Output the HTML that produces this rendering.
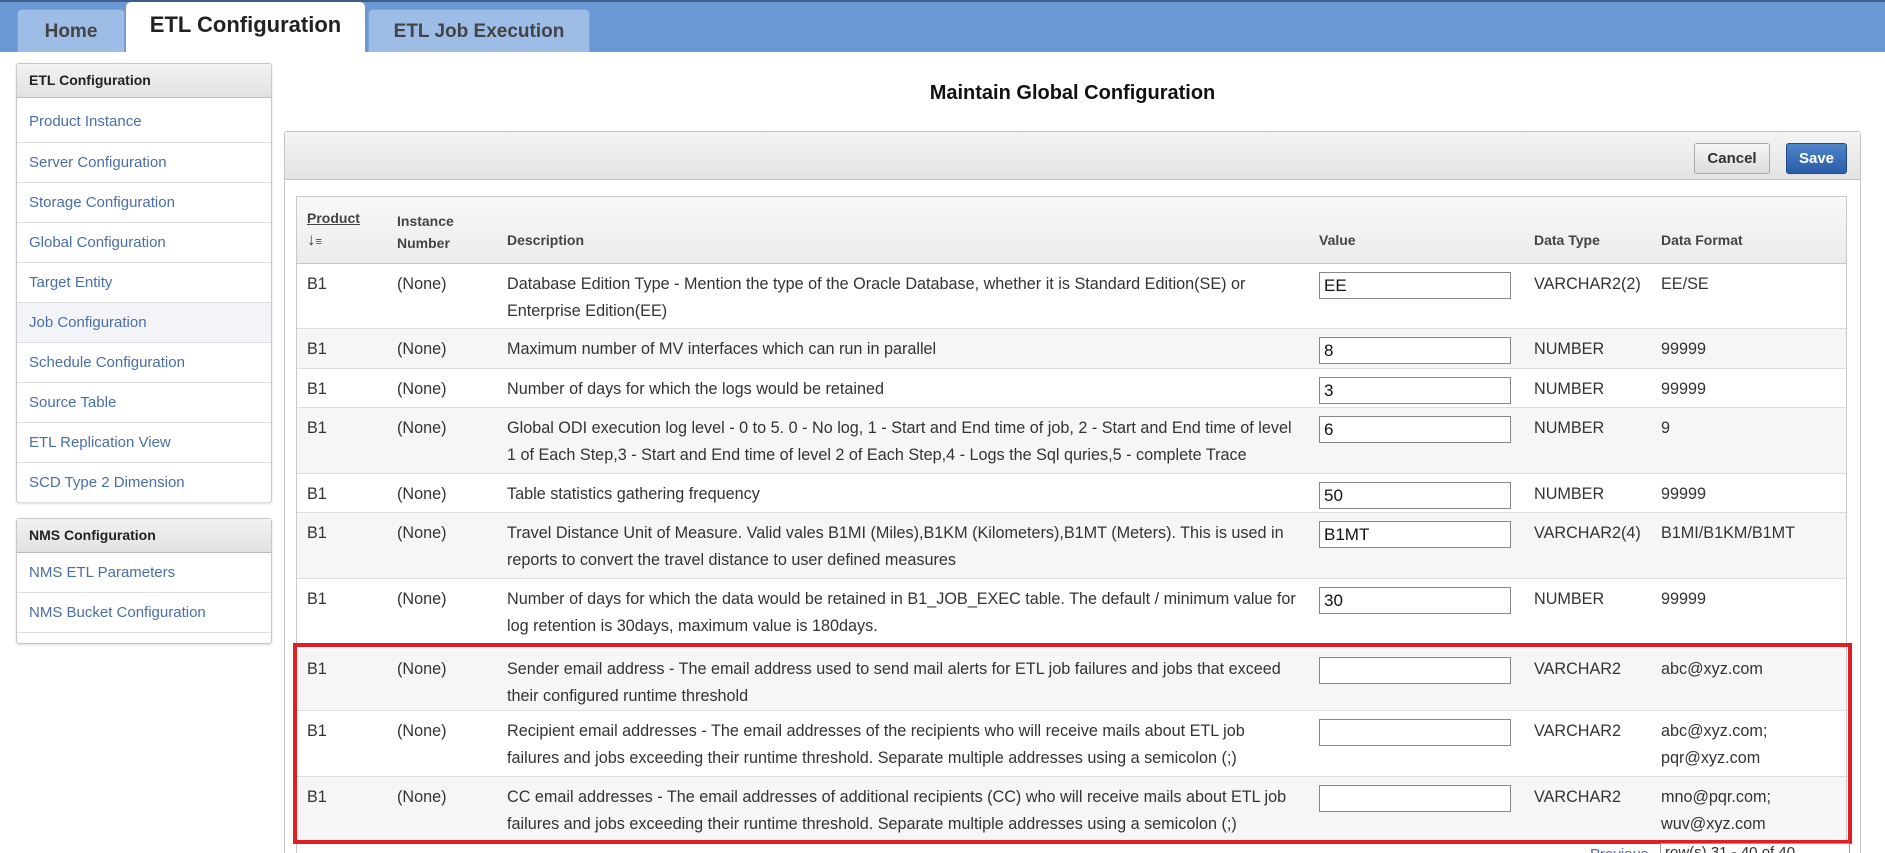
<!DOCTYPE html>
<html><head><meta charset="utf-8"><style>
*{box-sizing:border-box;margin:0;padding:0}
html,body{width:1885px;height:853px;overflow:hidden}
body{background:#fff;font-family:"Liberation Sans",Arial,sans-serif;color:#333;position:relative}
.topbar{position:absolute;left:0;top:0;width:1885px;height:52px;background:#6a98d4;border-top:2px solid #3d5f8a}
.tab{position:absolute;top:9px;height:43px;background:#9dbce6;border:1px solid #7fa4d6;border-bottom:none;border-radius:5px 5px 0 0;font-size:19px;font-weight:bold;color:#444;text-align:center;line-height:44px}
.tab.act{top:2px;height:50px;background:#fff;border:none;font-size:22px;color:#222;line-height:46px}
.side{position:absolute;left:16px;width:256px;border:1px solid #c8c8c8;border-radius:3px;background:#fff;box-shadow:0 1px 2px rgba(0,0,0,.15)}
.side .h{height:34px;background:linear-gradient(#f2f2f2,#e2e2e2);border-bottom:1px solid #bbb;font-weight:bold;font-size:14px;color:#222;padding:0 12px;line-height:32px}
.side .i{height:40px;border-bottom:1px solid #ddd;font-size:15px;color:#4a6ea8;padding:0 12px;line-height:40px}
.title{position:absolute;left:284px;width:1577px;top:82px;text-align:center;font-weight:bold;font-size:20px;color:#111}
.panel{position:absolute;left:284px;top:131px;width:1577px;height:722px;border:1px solid #c4c4c4;border-bottom:none;border-radius:3px 3px 0 0}
.tool{height:48px;background:linear-gradient(#f4f4f4,#e3e3e3);border-bottom:1px solid #c4c4c4}
.btn{position:absolute;top:12px;height:31px;border-radius:3px;font-weight:bold;font-size:15px;text-align:center;line-height:29px}
.tbl{position:absolute;left:296px;top:196px;width:1551px;border:1px solid #c8c8c8;border-bottom:none;height:657px}
.hd{position:absolute;left:0;top:0;width:100%;height:67px;background:linear-gradient(#f8f8f8,#ececec);border-bottom:1px solid #c8c8c8;font-weight:bold;font-size:14px;color:#444}
.row{position:absolute;left:0;width:100%;border-bottom:1px solid #ddd;font-size:16.2px;color:#333;line-height:27px}
.row.g{background:#f6f6f6}
.c{position:absolute;top:7px;white-space:nowrap}
.inp{position:absolute;left:1022px;top:8px;width:192px;height:27px;border:1px solid #888;background:#fff;font-size:17px;color:#111;padding-left:4px;line-height:25px}
.red{position:absolute;left:293px;top:643px;width:1559px;height:201px;border:4px solid #e01e24}
</style></head><body>
<div class="topbar"></div>
<div class="tab" style="left:17px;width:108px">Home</div>
<div class="tab act" style="left:126px;width:239px">ETL Configuration</div>
<div class="tab" style="left:368px;width:222px">ETL Job Execution</div>

<div class="side" style="top:63px;height:440px">
<div class="h">ETL Configuration</div>
<div class="i" style="height:45px;line-height:48px">Product Instance</div>
<div class="i">Server Configuration</div>
<div class="i">Storage Configuration</div>
<div class="i">Global Configuration</div>
<div class="i">Target Entity</div>
<div class="i" style="background:#f2f4f8">Job Configuration</div>
<div class="i">Schedule Configuration</div>
<div class="i">Source Table</div>
<div class="i">ETL Replication View</div>
<div class="i">SCD Type 2 Dimension</div>
</div>
<div class="side" style="top:518px;height:126px">
<div class="h">NMS Configuration</div>
<div class="i">NMS ETL Parameters</div>
<div class="i">NMS Bucket Configuration</div>
</div>

<div class="title">Maintain Global Configuration</div>
<div class="panel"><div class="tool"></div></div>
<div class="btn" style="left:1694px;top:143px;width:76px;background:linear-gradient(#f6f6f6,#dcdcdc);border:1px solid #aaa;color:#333">Cancel</div>
<div class="btn" style="left:1786px;top:143px;width:61px;background:linear-gradient(#4f84c8,#2a5ca8);border:1px solid #1d4a8c;color:#fff">Save</div>

<div class="tbl">
<div class="hd">
<div style="position:absolute;left:10px;top:13px;text-decoration:underline">Product</div>
<div style="position:absolute;left:10px;top:33px;font-weight:normal;font-size:17px">↓<span style="font-size:11px">≡</span></div>
<div style="position:absolute;left:100px;top:13px;line-height:22px">Instance<br>Number</div>
<div style="position:absolute;left:210px;top:35px">Description</div>
<div style="position:absolute;left:1022px;top:35px">Value</div>
<div style="position:absolute;left:1237px;top:35px">Data Type</div>
<div style="position:absolute;left:1364px;top:35px">Data Format</div>
</div>

<div class="row" style="top:67px;height:65px"><span class="c" style="left:10px">B1</span><span class="c" style="left:100px">(None)</span><span class="c" style="left:210px">Database Edition Type - Mention the type of the Oracle Database, whether it is Standard Edition(SE) or<br>Enterprise Edition(EE)</span><div class="inp">EE</div><span class="c" style="left:1237px">VARCHAR2(2)</span><span class="c" style="left:1364px">EE/SE</span></div>
<div class="row g" style="top:132px;height:40px"><span class="c" style="left:10px">B1</span><span class="c" style="left:100px">(None)</span><span class="c" style="left:210px">Maximum number of MV interfaces which can run in parallel</span><div class="inp">8</div><span class="c" style="left:1237px">NUMBER</span><span class="c" style="left:1364px">99999</span></div>
<div class="row" style="top:172px;height:39px"><span class="c" style="left:10px">B1</span><span class="c" style="left:100px">(None)</span><span class="c" style="left:210px">Number of days for which the logs would be retained</span><div class="inp">3</div><span class="c" style="left:1237px">NUMBER</span><span class="c" style="left:1364px">99999</span></div>
<div class="row g" style="top:211px;height:66px"><span class="c" style="left:10px">B1</span><span class="c" style="left:100px">(None)</span><span class="c" style="left:210px">Global ODI execution log level - 0 to 5. 0 - No log, 1 - Start and End time of job, 2 - Start and End time of level<br>1 of Each Step,3 - Start and End time of level 2 of Each Step,4 - Logs the Sql quries,5 - complete Trace</span><div class="inp">6</div><span class="c" style="left:1237px">NUMBER</span><span class="c" style="left:1364px">9</span></div>
<div class="row" style="top:277px;height:39px"><span class="c" style="left:10px">B1</span><span class="c" style="left:100px">(None)</span><span class="c" style="left:210px">Table statistics gathering frequency</span><div class="inp">50</div><span class="c" style="left:1237px">NUMBER</span><span class="c" style="left:1364px">99999</span></div>
<div class="row g" style="top:316px;height:66px"><span class="c" style="left:10px">B1</span><span class="c" style="left:100px">(None)</span><span class="c" style="left:210px">Travel Distance Unit of Measure. Valid vales B1MI (Miles),B1KM (Kilometers),B1MT (Meters). This is used in<br>reports to convert the travel distance to user defined measures</span><div class="inp">B1MT</div><span class="c" style="left:1237px">VARCHAR2(4)</span><span class="c" style="left:1364px">B1MI/B1KM/B1MT</span></div>
<div class="row" style="top:382px;height:66px"><span class="c" style="left:10px">B1</span><span class="c" style="left:100px">(None)</span><span class="c" style="left:210px">Number of days for which the data would be retained in B1_JOB_EXEC table. The default / minimum value for<br>log retention is 30days, maximum value is 180days.</span><div class="inp">30</div><span class="c" style="left:1237px">NUMBER</span><span class="c" style="left:1364px">99999</span></div>
<div class="row g" style="top:452px;height:62px"><span class="c" style="left:10px">B1</span><span class="c" style="left:100px">(None)</span><span class="c" style="left:210px">Sender email address - The email address used to send mail alerts for ETL job failures and jobs that exceed<br>their configured runtime threshold</span><div class="inp"></div><span class="c" style="left:1237px">VARCHAR2</span><span class="c" style="left:1364px">abc@xyz.com</span></div>
<div class="row" style="top:514px;height:66px"><span class="c" style="left:10px">B1</span><span class="c" style="left:100px">(None)</span><span class="c" style="left:210px">Recipient email addresses - The email addresses of the recipients who will receive mails about ETL job<br>failures and jobs exceeding their runtime threshold. Separate multiple addresses using a semicolon (;)</span><div class="inp"></div><span class="c" style="left:1237px">VARCHAR2</span><span class="c" style="left:1364px">abc@xyz.com;<br>pqr@xyz.com</span></div>
<div class="row g" style="top:580px;height:64px"><span class="c" style="left:10px">B1</span><span class="c" style="left:100px">(None)</span><span class="c" style="left:210px">CC email addresses - The email addresses of additional recipients (CC) who will receive mails about ETL job<br>failures and jobs exceeding their runtime threshold. Separate multiple addresses using a semicolon (;)</span><div class="inp"></div><span class="c" style="left:1237px">VARCHAR2</span><span class="c" style="left:1364px">mno@pqr.com;<br>wuv@xyz.com</span></div>
</div>
<div class="red"></div>
<div style="position:absolute;left:1590px;top:846px;font-size:15px;color:#4a6ea8">Previous</div>
<div style="position:absolute;left:1660px;top:843px;width:190px;height:20px;border:1px solid #999;background:#fff;font-size:15px;padding-left:4px">row(s) 31 - 40 of 40</div>
</body></html>
